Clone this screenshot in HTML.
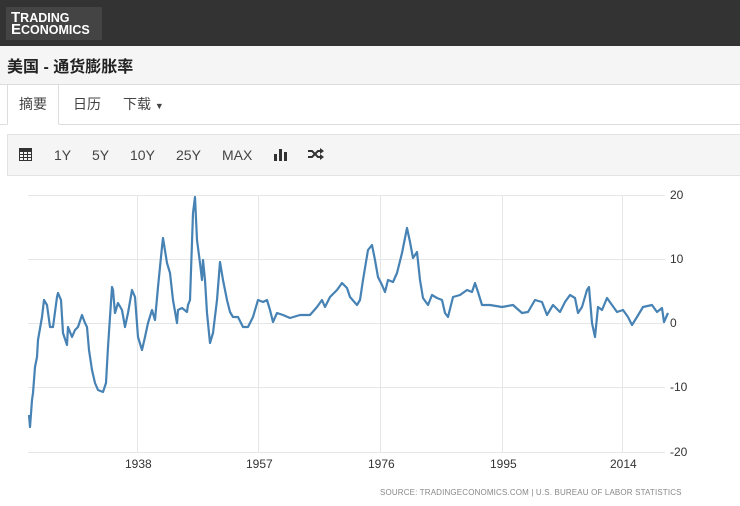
<!DOCTYPE html>
<html><head><meta charset="utf-8"><style>
*{margin:0;padding:0;box-sizing:border-box}
body{width:740px;height:506px;background:#fff;font-family:"Liberation Sans","Noto Sans CJK SC",sans-serif;position:relative;overflow:hidden;color:#333}
.hdr{position:absolute;left:0;top:0;width:740px;height:46px;background:#333}
.logo{position:absolute;left:6px;top:7px;width:96px;height:33px;background:#444;color:#fff;font-weight:bold;line-height:11px;padding:5px 0 0 5px}
.logo span{font-size:15px}
.logo i{font-style:normal;font-size:12.5px}
.title{position:absolute;left:0;top:46px;width:740px;height:39px;background:#f5f5f5;border-bottom:1px solid #ddd;font-size:16px;font-weight:bold;padding:7px 0 0 7px;color:#222}
.tab{position:absolute;top:85px;height:40px;font-size:14px;padding-top:9px;color:#444}
.tabs{position:absolute;left:0;top:124px;width:740px;border-top:1px solid #ddd}
.act{left:7px;width:52px;text-align:center;background:#fff;border:1px solid #ddd;border-top:none;border-bottom:1px solid #fff;z-index:2}
.tb{position:absolute;left:7px;top:134px;width:740px;height:42px;background:#f5f5f5;border:1px solid #e3e3e3;font-size:14px;color:#444}
.tb span{position:absolute;top:12px}
.ax{position:absolute;font-size:12px;color:#333}
.src{position:absolute;left:380px;top:488px;font-size:8px;color:#888;letter-spacing:0.15px}
</style></head><body>
<div class="hdr"><div class="logo"><span>T</span><i>RADING</i><br><span>E</span><i>CONOMICS</i></div></div>
<div class="title">美国 - 通货膨胀率</div>
<div class="tabs"></div>
<div class="tab act">摘要</div>
<div class="tab" style="left:73px">日历</div>
<div class="tab" style="left:123px">下载 <span style="font-size:9px">▼</span></div>
<div class="tb">
<svg style="position:absolute;left:11px;top:12px" width="13" height="14" viewBox="0 0 13 14"><rect x="0" y="1" width="13" height="13" fill="#333"/><g fill="#f5f5f5"><rect x="1" y="5" width="3" height="2"/><rect x="5" y="5" width="3" height="2"/><rect x="9" y="5" width="3" height="2"/><rect x="1" y="8" width="3" height="2"/><rect x="5" y="8" width="3" height="2"/><rect x="9" y="8" width="3" height="2"/><rect x="1" y="11" width="3" height="2"/><rect x="5" y="11" width="3" height="2"/><rect x="9" y="11" width="3" height="2"/></g></svg>
<span style="left:46px">1Y</span><span style="left:84px">5Y</span><span style="left:122px">10Y</span><span style="left:168px">25Y</span><span style="left:214px">MAX</span>
<svg style="position:absolute;left:266px;top:13px" width="14" height="13"><rect x="0" y="6" width="3" height="7" fill="#333"/><rect x="5" y="1" width="3" height="12" fill="#333"/><rect x="10" y="4" width="3" height="9" fill="#333"/></svg>
<svg style="position:absolute;left:300px;top:13px" width="16" height="12" viewBox="0 0 16 12"><path d="M0 3h4l6 6h3M0 9h4l6-6h3" stroke="#333" stroke-width="2" fill="none"/><path d="M12 0l4 3-4 3zM12 6l4 3-4 3z" fill="#333"/></svg>
</div>
<svg style="position:absolute;left:0;top:0" width="740" height="506">
<g stroke="#e6e6e6" stroke-width="1">
<line x1="28" y1="195.5" x2="665" y2="195.5"/><line x1="28" y1="259.5" x2="665" y2="259.5"/><line x1="28" y1="323.5" x2="665" y2="323.5"/><line x1="28" y1="387.5" x2="665" y2="387.5"/><line x1="28" y1="452.5" x2="665" y2="452.5"/>
<line x1="137.5" y1="195" x2="137.5" y2="452"/><line x1="258.5" y1="195" x2="258.5" y2="452"/><line x1="380.5" y1="195" x2="380.5" y2="452"/><line x1="502.5" y1="195" x2="502.5" y2="452"/><line x1="622.5" y1="195" x2="622.5" y2="452"/>
</g>
<polyline fill="none" stroke="#4682b4" stroke-width="2.2" stroke-linejoin="round" points="29,415 30,427 32,400 33,393 35,367 37,357 38,340 42,317 44,300 47,305 50,327 53,327 57,297 58,293 61,300 63,333 67,345 68,327 72,337 75,330 78,327 82,315 85,323 87,327 89,350 92,370 95,383 98,390 103,392 106,383 108,347 112,287 113,290 115,313 118,303 122,310 125,327 128,313 132,290 135,297 138,337 142,350 145,337 148,323 152,310 155,320 158,287 162,247 163,238 167,263 170,273 173,300 177,323 178,310 182,308 187,312 188,305 190,300 193,213 195,197 197,240 200,263 202,280 203,260 205,280 207,313 210,343 213,333 217,300 220,262 223,280 227,300 230,312 233,317 238,317 243,327 248,327 253,317 258,300 263,302 267,300 270,310 273,322 277,313 283,315 290,318 300,315 310,315 317,307 322,300 325,307 330,297 337,290 342,283 347,288 350,297 357,305 360,300 363,280 368,250 372,245 375,260 378,277 382,285 385,292 388,280 393,282 397,273 402,253 407,228 410,242 413,258 417,252 420,280 423,298 428,305 432,295 437,298 442,300 445,313 448,317 453,297 460,295 467,290 472,292 475,283 478,292 482,305 490,305 502,307 513,305 522,313 528,312 535,300 542,302 547,315 553,305 560,312 565,302 570,295 575,298 578,313 582,307 587,290 589,287 592,323 595,337 598,307 602,310 607,298 612,305 617,312 623,310 628,317 632,325 637,317 643,307 652,305 657,312 662,308 664,322 668,313"/>
</svg>
<div class="ax" style="left:670px;top:188px">20</div>
<div class="ax" style="left:670px;top:252px">10</div>
<div class="ax" style="left:670px;top:316px">0</div>
<div class="ax" style="left:670px;top:380px">-10</div>
<div class="ax" style="left:670px;top:445px">-20</div>
<div class="ax" style="left:125px;top:457px">1938</div>
<div class="ax" style="left:246px;top:457px">1957</div>
<div class="ax" style="left:368px;top:457px">1976</div>
<div class="ax" style="left:490px;top:457px">1995</div>
<div class="ax" style="left:610px;top:457px">2014</div>
<div class="src">SOURCE: TRADINGECONOMICS.COM | U.S. BUREAU OF LABOR STATISTICS</div>
</body></html>
